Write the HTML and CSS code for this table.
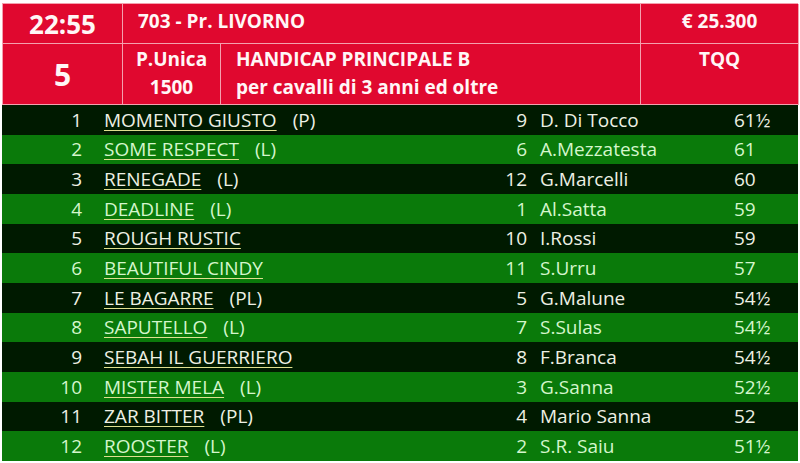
FILE: index.html
```html
<!DOCTYPE html>
<html>
<head>
<meta charset="utf-8">
<link rel="stylesheet" href="styles.css">
</head>
<body>
<div class="card">
  <div class="head">
    <div class="h-time">22:55</div>
    <div class="h-title">703 - Pr. LIVORNO</div>
    <div class="h-prize">€ 25.300</div>
    <div class="h-num">5</div>
    <div class="h-track"><span>P.Unica</span><span>1500</span></div>
    <div class="h-desc"><span>HANDICAP PRINCIPALE B</span><span>per cavalli di 3 anni ed oltre</span></div>
    <div class="h-bet">TQQ</div>
  </div>
  <div class="list">
    <div class="row dark"><span class="n">1</span><span class="name"><u>MOMENTO GIUSTO</u><i>(P)</i></span><span class="c">9</span><span class="j">D. Di Tocco</span><span class="w">61½</span></div>
    <div class="row light"><span class="n">2</span><span class="name"><u>SOME RESPECT</u><i>(L)</i></span><span class="c">6</span><span class="j">A.Mezzatesta</span><span class="w">61</span></div>
    <div class="row dark"><span class="n">3</span><span class="name"><u>RENEGADE</u><i>(L)</i></span><span class="c">12</span><span class="j">G.Marcelli</span><span class="w">60</span></div>
    <div class="row light"><span class="n">4</span><span class="name"><u>DEADLINE</u><i>(L)</i></span><span class="c">1</span><span class="j">Al.Satta</span><span class="w">59</span></div>
    <div class="row dark"><span class="n">5</span><span class="name"><u>ROUGH RUSTIC</u></span><span class="c">10</span><span class="j">I.Rossi</span><span class="w">59</span></div>
    <div class="row light"><span class="n">6</span><span class="name"><u>BEAUTIFUL CINDY</u></span><span class="c">11</span><span class="j">S.Urru</span><span class="w">57</span></div>
    <div class="row dark"><span class="n">7</span><span class="name"><u>LE BAGARRE</u><i>(PL)</i></span><span class="c">5</span><span class="j">G.Malune</span><span class="w">54½</span></div>
    <div class="row light"><span class="n">8</span><span class="name"><u>SAPUTELLO</u><i>(L)</i></span><span class="c">7</span><span class="j">S.Sulas</span><span class="w">54½</span></div>
    <div class="row dark"><span class="n">9</span><span class="name"><u>SEBAH IL GUERRIERO</u></span><span class="c">8</span><span class="j">F.Branca</span><span class="w">54½</span></div>
    <div class="row light"><span class="n">10</span><span class="name"><u>MISTER MELA</u><i>(L)</i></span><span class="c">3</span><span class="j">G.Sanna</span><span class="w">52½</span></div>
    <div class="row dark"><span class="n">11</span><span class="name"><u>ZAR BITTER</u><i>(PL)</i></span><span class="c">4</span><span class="j">Mario Sanna</span><span class="w">52</span></div>
    <div class="row light"><span class="n">12</span><span class="name"><u>ROOSTER</u><i>(L)</i></span><span class="c">2</span><span class="j">S.R. Saiu</span><span class="w">51½</span></div>
  </div>
</div>
</body>
</html>
```

FILE: styles.css
```css
html, body {
  margin: 0;
  padding: 0;
  background: #ffffff;
}
body {
  font-family: "Open Sans", "Noto Sans", sans-serif;
}
.card {
  padding: 3px 2px 0 2px;
  width: 796px;
}
.head {
  display: grid;
  grid-template-columns: 120px 98px 420px 158px;
  grid-template-rows: 40px 61px;
  background: #e0082f;
  border-top: 1px solid #f4a0ae;
  border-left: 1px solid #f4a0ae;
  box-sizing: border-box;
  color: #fff6f6;
  font-weight: 700;
}
.head > div {
  border-right: 1px solid #f4a0ae;
  border-bottom: 1px solid #f4a0ae;
  box-sizing: border-box;
}
.h-time {
  font-size: 26px;
  display: flex;
  align-items: center;
  justify-content: center;
}
.h-title {
  grid-column: 2 / 4;
  font-size: 19px;
  padding: 4px 0 0 15px;
}
.h-prize {
  font-size: 19px;
  text-align: center;
  padding-top: 4px;
}
.h-num {
  font-size: 30px;
  display: flex;
  align-items: center;
  justify-content: center;
}
.h-track, .h-desc {
  display: flex;
  flex-direction: column;
  font-size: 19px;
  line-height: 28px;
  padding-top: 1px;
}
.h-track {
  align-items: center;
}
.h-desc {
  padding-left: 15px;
}
.h-bet {
  font-size: 19px;
  text-align: center;
  padding-top: 2px;
}
.list {
  display: flex;
  flex-direction: column;
}
.row {
  height: 29.67px;
  display: grid;
  grid-template-columns: 80px 420px 25px 193px 1fr;
  column-gap: 0;
  align-items: center;
  font-size: 19px;
  line-height: 24px;
  white-space: nowrap;
}
.row.dark {
  background: #001a00;
  color: #eef0e4;
}
.row.light {
  background: #0a7a0a;
  color: #d4f6cc;
}
.row u {
  text-decoration-color: #e0e090;
  text-underline-offset: 3px;
}
.n, .c {
  text-align: right;
}
.name {
  padding-left: 22px;
}
.name i {
  font-style: normal;
  margin-left: 16px;
}
.j {
  padding-left: 13px;
}
.w {
  padding-left: 14px;
}
```
